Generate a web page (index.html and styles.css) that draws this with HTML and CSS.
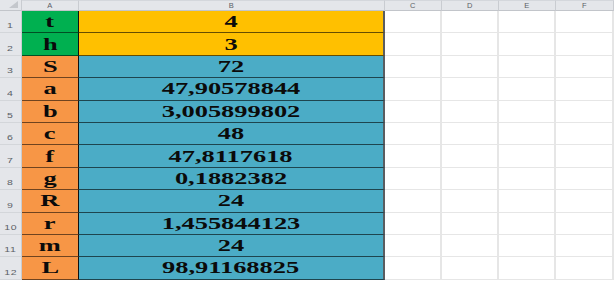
FILE: index.html
```html
<!DOCTYPE html>
<html lang="en">
<head>
  <meta charset="UTF-8">
  <title>Sheet1</title>
  <link rel="stylesheet" href="styles.css">
</head>
<body>
  <div class="sheet">
    <div class="corner"><span class="tri"></span></div>
    <div class="col-head">A</div>
    <div class="col-head">B</div>
    <div class="col-head">C</div>
    <div class="col-head">D</div>
    <div class="col-head">E</div>
    <div class="col-head">F</div>

    <div class="row-head"><span>1</span></div>
    <div class="cell key green"><span>t</span></div>
    <div class="cell val gold"><span>4</span></div>
    <div class="cell"></div><div class="cell"></div><div class="cell"></div><div class="cell"></div>

    <div class="row-head"><span>2</span></div>
    <div class="cell key green"><span>h</span></div>
    <div class="cell val gold"><span>3</span></div>
    <div class="cell"></div><div class="cell"></div><div class="cell"></div><div class="cell"></div>

    <div class="row-head"><span>3</span></div>
    <div class="cell key orange"><span>S</span></div>
    <div class="cell val teal"><span>72</span></div>
    <div class="cell"></div><div class="cell"></div><div class="cell"></div><div class="cell"></div>

    <div class="row-head"><span>4</span></div>
    <div class="cell key orange"><span>a</span></div>
    <div class="cell val teal"><span>47,90578844</span></div>
    <div class="cell"></div><div class="cell"></div><div class="cell"></div><div class="cell"></div>

    <div class="row-head"><span>5</span></div>
    <div class="cell key orange"><span>b</span></div>
    <div class="cell val teal"><span>3,005899802</span></div>
    <div class="cell"></div><div class="cell"></div><div class="cell"></div><div class="cell"></div>

    <div class="row-head"><span>6</span></div>
    <div class="cell key orange"><span>c</span></div>
    <div class="cell val teal"><span>48</span></div>
    <div class="cell"></div><div class="cell"></div><div class="cell"></div><div class="cell"></div>

    <div class="row-head"><span>7</span></div>
    <div class="cell key orange"><span>f</span></div>
    <div class="cell val teal"><span>47,8117618</span></div>
    <div class="cell"></div><div class="cell"></div><div class="cell"></div><div class="cell"></div>

    <div class="row-head"><span>8</span></div>
    <div class="cell key orange"><span>g</span></div>
    <div class="cell val teal"><span>0,1882382</span></div>
    <div class="cell"></div><div class="cell"></div><div class="cell"></div><div class="cell"></div>

    <div class="row-head"><span>9</span></div>
    <div class="cell key orange"><span>R</span></div>
    <div class="cell val teal"><span>24</span></div>
    <div class="cell"></div><div class="cell"></div><div class="cell"></div><div class="cell"></div>

    <div class="row-head"><span>10</span></div>
    <div class="cell key orange"><span>r</span></div>
    <div class="cell val teal"><span>1,455844123</span></div>
    <div class="cell"></div><div class="cell"></div><div class="cell"></div><div class="cell"></div>

    <div class="row-head"><span>11</span></div>
    <div class="cell key orange"><span>m</span></div>
    <div class="cell val teal"><span>24</span></div>
    <div class="cell"></div><div class="cell"></div><div class="cell"></div><div class="cell"></div>

    <div class="row-head"><span>12</span></div>
    <div class="cell key orange"><span>L</span></div>
    <div class="cell val teal"><span>98,91168825</span></div>
    <div class="cell"></div><div class="cell"></div><div class="cell"></div><div class="cell"></div>
  </div>
</body>
</html>
```

FILE: styles.css
```css
html, body {
  margin: 0;
  padding: 0;
  background: #ffffff;
  overflow: hidden;
}
.sheet {
  display: grid;
  grid-template-columns: 22px 57px 306px 57px 57px 57px 1fr;
  grid-template-rows: 11px repeat(12, 22.4px);
  width: 614px;
  font-family: "Liberation Serif", "Times New Roman", serif;
}
.corner, .col-head, .row-head {
  background: #e4e6ea;
  color: #5b5f66;
  font-family: "Liberation Sans", Arial, sans-serif;
  font-size: 7.5px;
  box-sizing: border-box;
  border-right: 1px solid #c9ccd1;
  border-bottom: 1px solid #c2c5ca;
}
.corner {
  position: relative;
}
.corner .tri {
  position: absolute;
  right: 3px;
  bottom: 2px;
  width: 0;
  height: 0;
  border-left: 9px solid transparent;
  border-bottom: 7px solid #c4c7cc;
}
.col-head {
  display: flex;
  align-items: center;
  justify-content: center;
  border-top: 1px solid #d4d7dc;
}
.col-head {
  letter-spacing: 0.5px;
}
.row-head {
  display: flex;
  align-items: flex-end;
  justify-content: center;
  padding-bottom: 2px;
  border-bottom-color: #d3d6da;
}
.row-head span {
  display: inline-block;
  letter-spacing: 0.5px;
  transform: scaleX(1.4);
}
.cell {
  box-sizing: border-box;
  border-right: 2px solid #e6e6e6;
  border-bottom: 1px solid #e6e6e6;
  display: flex;
  align-items: center;
  justify-content: center;
  font-weight: bold;
  font-size: 16px;
  color: #0b0b0b;
}
.cell span {
  display: inline-block;
  transform: scaleX(1.65);
  padding-top: 1px;
}
.key {
  border-right: 1px solid #111;
  border-bottom: 1px solid rgba(0, 0, 0, 0.55);
}
.val {
  border-right: 2px solid #5a5d60;
  border-bottom: 1px solid rgba(0, 0, 0, 0.6);
}
.green  { background: #00b050; }
.gold   { background: #ffc000; }
.orange { background: #f79646; }
.teal   { background: #4bacc6; }
```
